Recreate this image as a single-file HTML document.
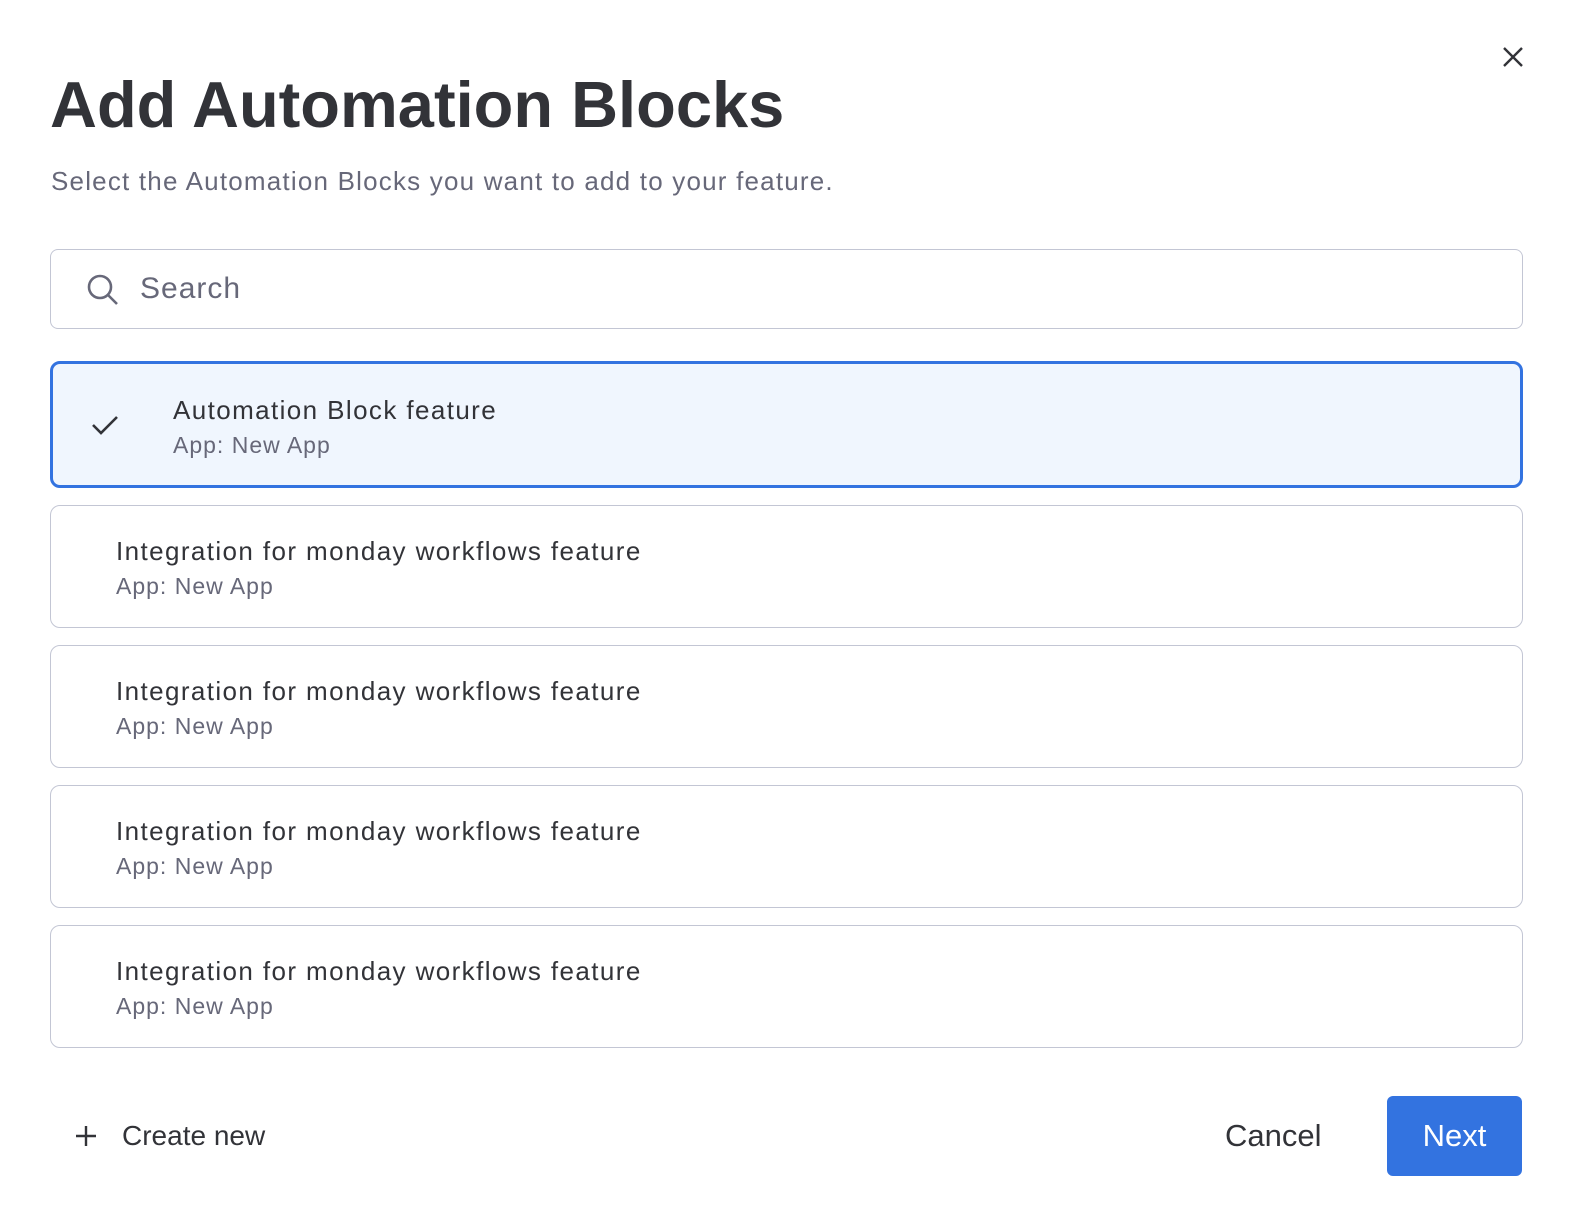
<!DOCTYPE html>
<html><head><meta charset="utf-8"><style>
body{margin:0;width:1570px;height:1212px;background:#fff;font-family:"Liberation Sans",sans-serif;position:relative;overflow:hidden;color:#323338}
.a{position:absolute}
*{box-sizing:border-box}
h1{position:absolute;left:50px;top:67px;margin:0;font-size:65px;font-weight:bold;letter-spacing:0px;color:#323338}
.sub{left:51px;top:166px;font-size:26px;color:#676879;letter-spacing:1.2px}
.search{left:50px;top:249px;width:1473px;height:80px;border:1.5px solid #c3c6d4;border-radius:8px}
.card{left:50px;width:1473px;height:123px;border:1.5px solid #c3c6d4;border-radius:10px}
.t{position:absolute;left:65px;top:30px;font-size:26px;color:#323338;letter-spacing:1.4px}
.s{position:absolute;left:65px;top:67px;font-size:23px;color:#676879;letter-spacing:1px}
</style></head><body>
<svg class="a" style="left:1501px;top:45px" width="24" height="24" viewBox="0 0 24 24"><path d="M3 3L21 21M21 3L3 21" stroke="#323338" stroke-width="2.4"/></svg>
<h1>Add Automation Blocks</h1>
<div class="a sub">Select the Automation Blocks you want to add to your feature.</div>
<div class="a search">
<svg class="a" style="left:35px;top:23px" width="34" height="34" viewBox="0 0 34 34"><circle cx="14" cy="14" r="11" fill="none" stroke="#676879" stroke-width="2.6"/><path d="M22 22L31 31" stroke="#676879" stroke-width="2.6"/></svg>
<div class="a" style="left:89px;top:22px;font-size:30px;color:#676879;letter-spacing:1px">Search</div>
</div>
<div class="a card" style="top:361px;height:127px;border:3px solid #3373e0;background:#f0f6fe">
<svg class="a" style="left:38px;top:50px" width="28" height="22" viewBox="0 0 28 22"><path d="M2 11L10 19L26 3" fill="none" stroke="#323338" stroke-width="2.6"/></svg>
<div class="t" style="left:120px;top:31px">Automation Block feature</div>
<div class="s" style="left:120px;top:68px">App: New App</div>
</div>
<div class="a card" style="top:505px"><div class="t">Integration for monday workflows feature</div><div class="s">App: New App</div></div>
<div class="a card" style="top:645px"><div class="t">Integration for monday workflows feature</div><div class="s">App: New App</div></div>
<div class="a card" style="top:785px"><div class="t">Integration for monday workflows feature</div><div class="s">App: New App</div></div>
<div class="a card" style="top:925px"><div class="t">Integration for monday workflows feature</div><div class="s">App: New App</div></div>
<svg class="a" style="left:75px;top:1125px" width="22" height="22" viewBox="0 0 22 22"><path d="M11 1V21M1 11H21" stroke="#323338" stroke-width="2.4"/></svg>
<div class="a" style="left:122px;top:1120px;font-size:28px">Create new</div>
<div class="a" style="left:1225px;top:1118px;font-size:31px">Cancel</div>
<div class="a" style="left:1387px;top:1096px;width:135px;height:80px;background:#3373e0;border-radius:6px;color:#fff;font-size:31px;text-align:center;line-height:80px">Next</div>
</body></html>
